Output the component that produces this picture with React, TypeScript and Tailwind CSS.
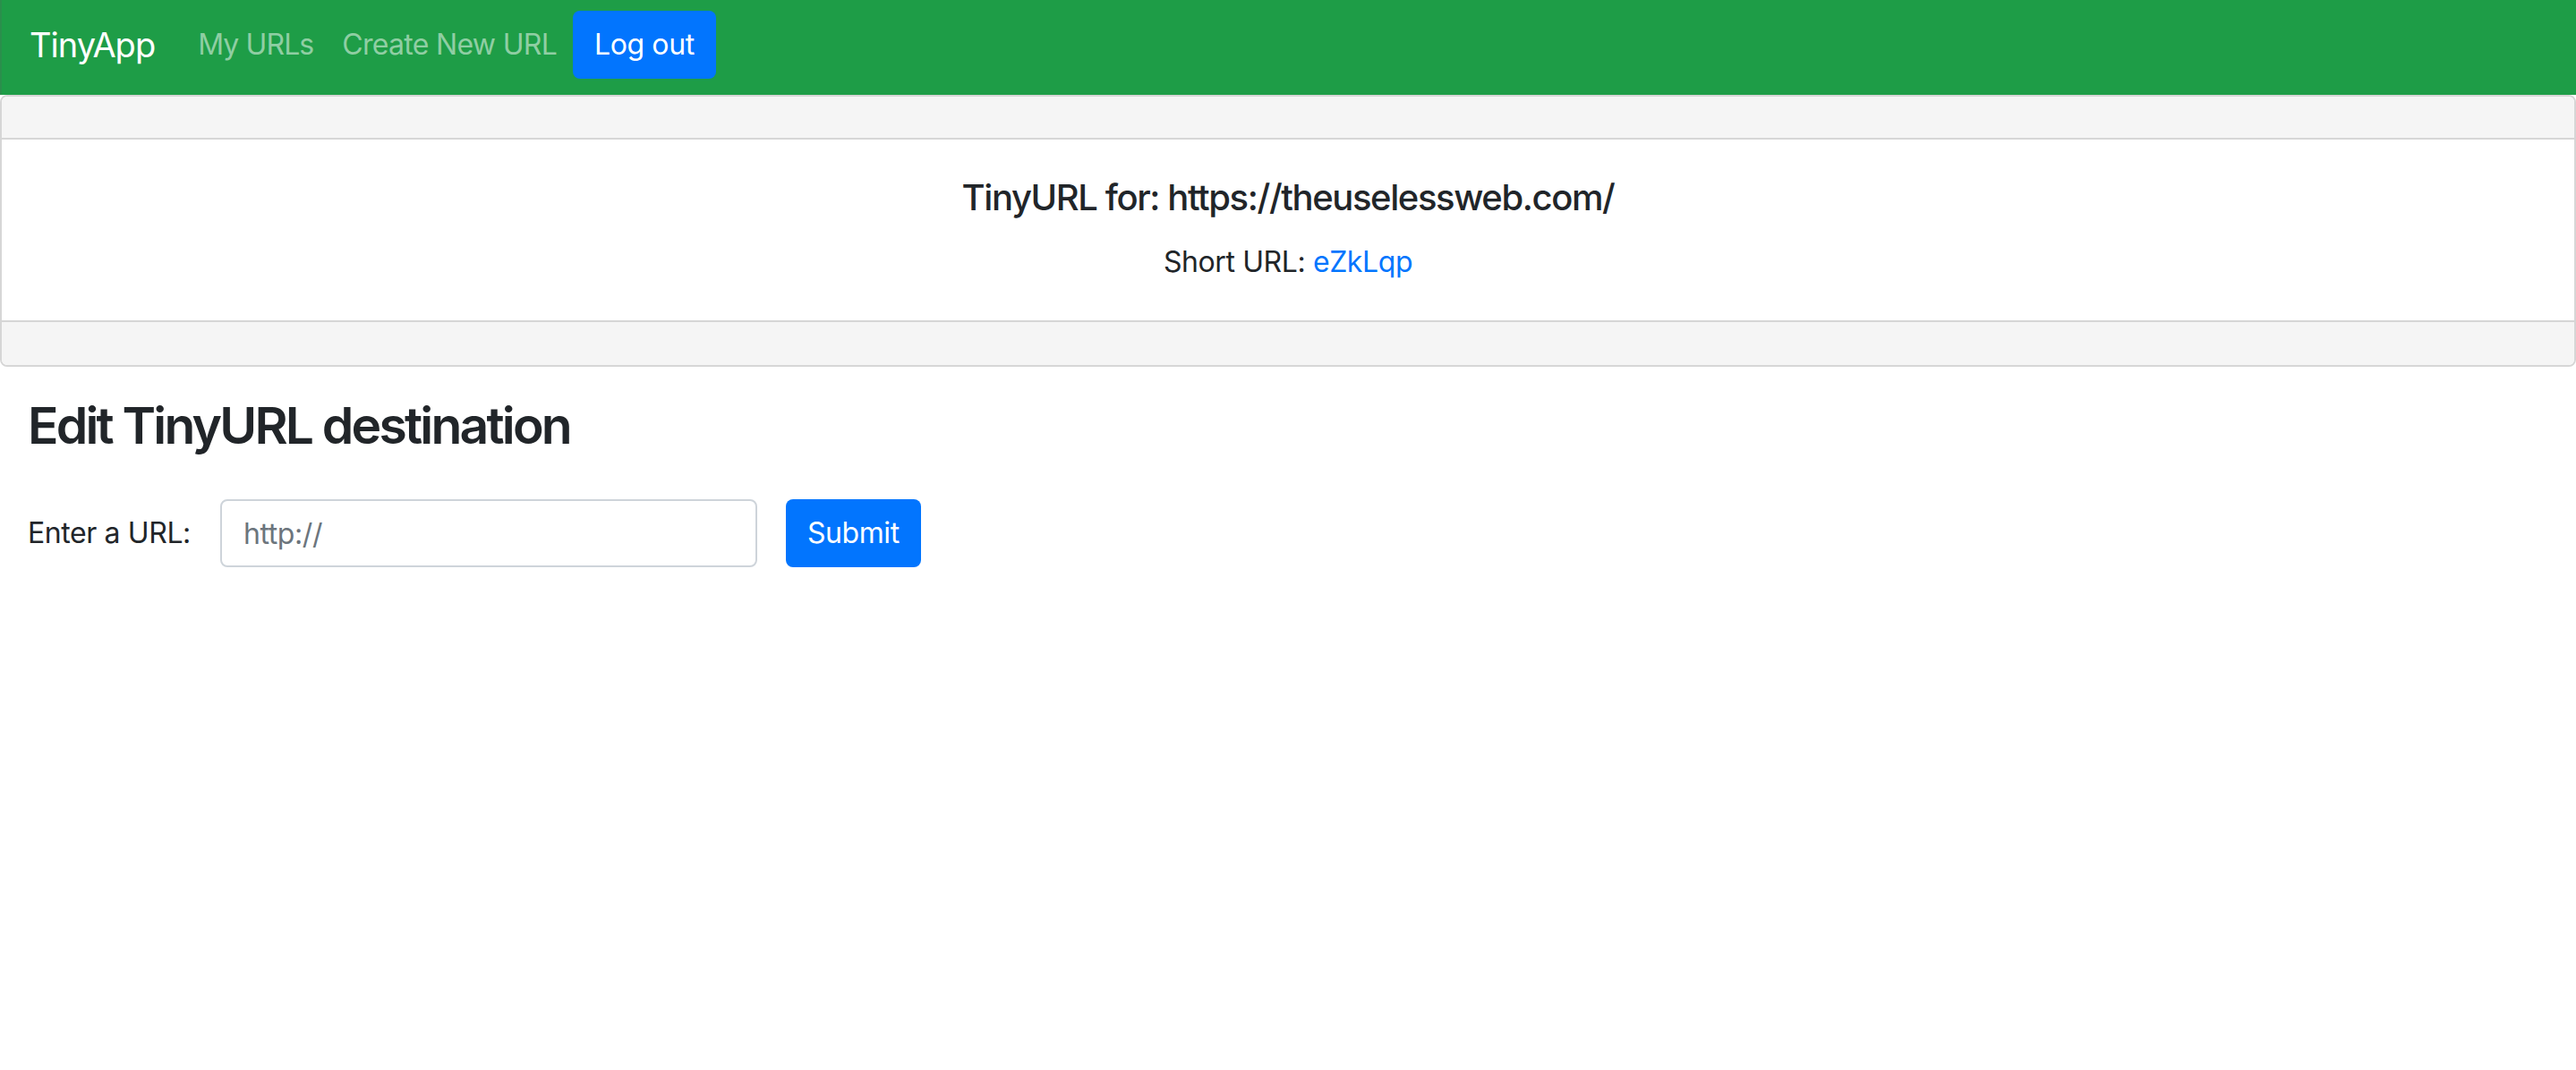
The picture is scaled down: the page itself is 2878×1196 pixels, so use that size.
export default function App() {
  return (
    <div className="min-h-screen bg-white text-[#212529] font-['Inter','Noto_Sans',sans-serif]">
      {/* navbar */}
      <nav className="h-[106px] bg-[#1e9d47] border-l-2 border-[#2a8f4c] flex items-start pt-[12px] pl-[31px]">
        <a className="text-[38px] leading-[76px] text-white mr-[48px] tracking-[-1px]">TinyApp</a>
        <div className="flex items-center h-[76px]">
          <a className="text-[32px] leading-[48px] text-[#8fcea3] tracking-[-0.9px]">My URLs</a>
          <a className="text-[32px] leading-[48px] text-[#8fcea3] ml-[32px] tracking-[-0.7px]">Create New URL</a>
          <button className="ml-[18px] h-[76px] px-[24px] rounded-[8px] bg-[#0275fe] text-white text-[32px] leading-[48px] tracking-[-0.4px]">
            Log out
          </button>
        </div>
      </nav>

      {/* card */}
      <div className="border-2 border-[#d6d6d6] rounded-[8px] overflow-hidden">
        <div className="h-[48px] bg-[#f5f5f5] border-b-2 border-[#d6d6d6]"></div>
        <div className="bg-white pt-[41px] pb-[41px] text-center">
          <h5 className="text-[40px] leading-[48px] font-medium mb-[24px] tracking-[-1.4px]">
            TinyURL for: https://theuselessweb.com/
          </h5>
          <p className="text-[32px] leading-[48px] tracking-[-0.4px]">
            Short URL: <a className="text-[#0275fe]">eZkLqp</a>
          </p>
        </div>
        <div className="h-[50px] bg-[#f5f5f5] border-t-2 border-[#d6d6d6]"></div>
      </div>

      {/* edit form */}
      <div className="pl-[31px]">
        <h2 className="mt-[32px] text-[57px] leading-[68px] font-semibold tracking-[-2.8px]">Edit TinyURL destination</h2>
        <form className="mt-[48px] flex items-center">
          <label className="text-[32px] leading-[48px] tracking-[-0.4px]">Enter a URL:</label>
          <input
            type="text"
            placeholder="http://"
            className="ml-[33px] w-[600px] h-[76px] px-[24px] border-2 border-[#ced4da] rounded-[8px] text-[32px] placeholder:text-[#6c757d] outline-none tracking-[-0.4px]"
          />
          <button
            type="button"
            className="ml-[32px] h-[76px] px-[24px] rounded-[8px] bg-[#0275fe] text-white text-[32px] leading-[48px] tracking-[-0.4px]"
          >
            Submit
          </button>
        </form>
      </div>
    </div>
  );
}
